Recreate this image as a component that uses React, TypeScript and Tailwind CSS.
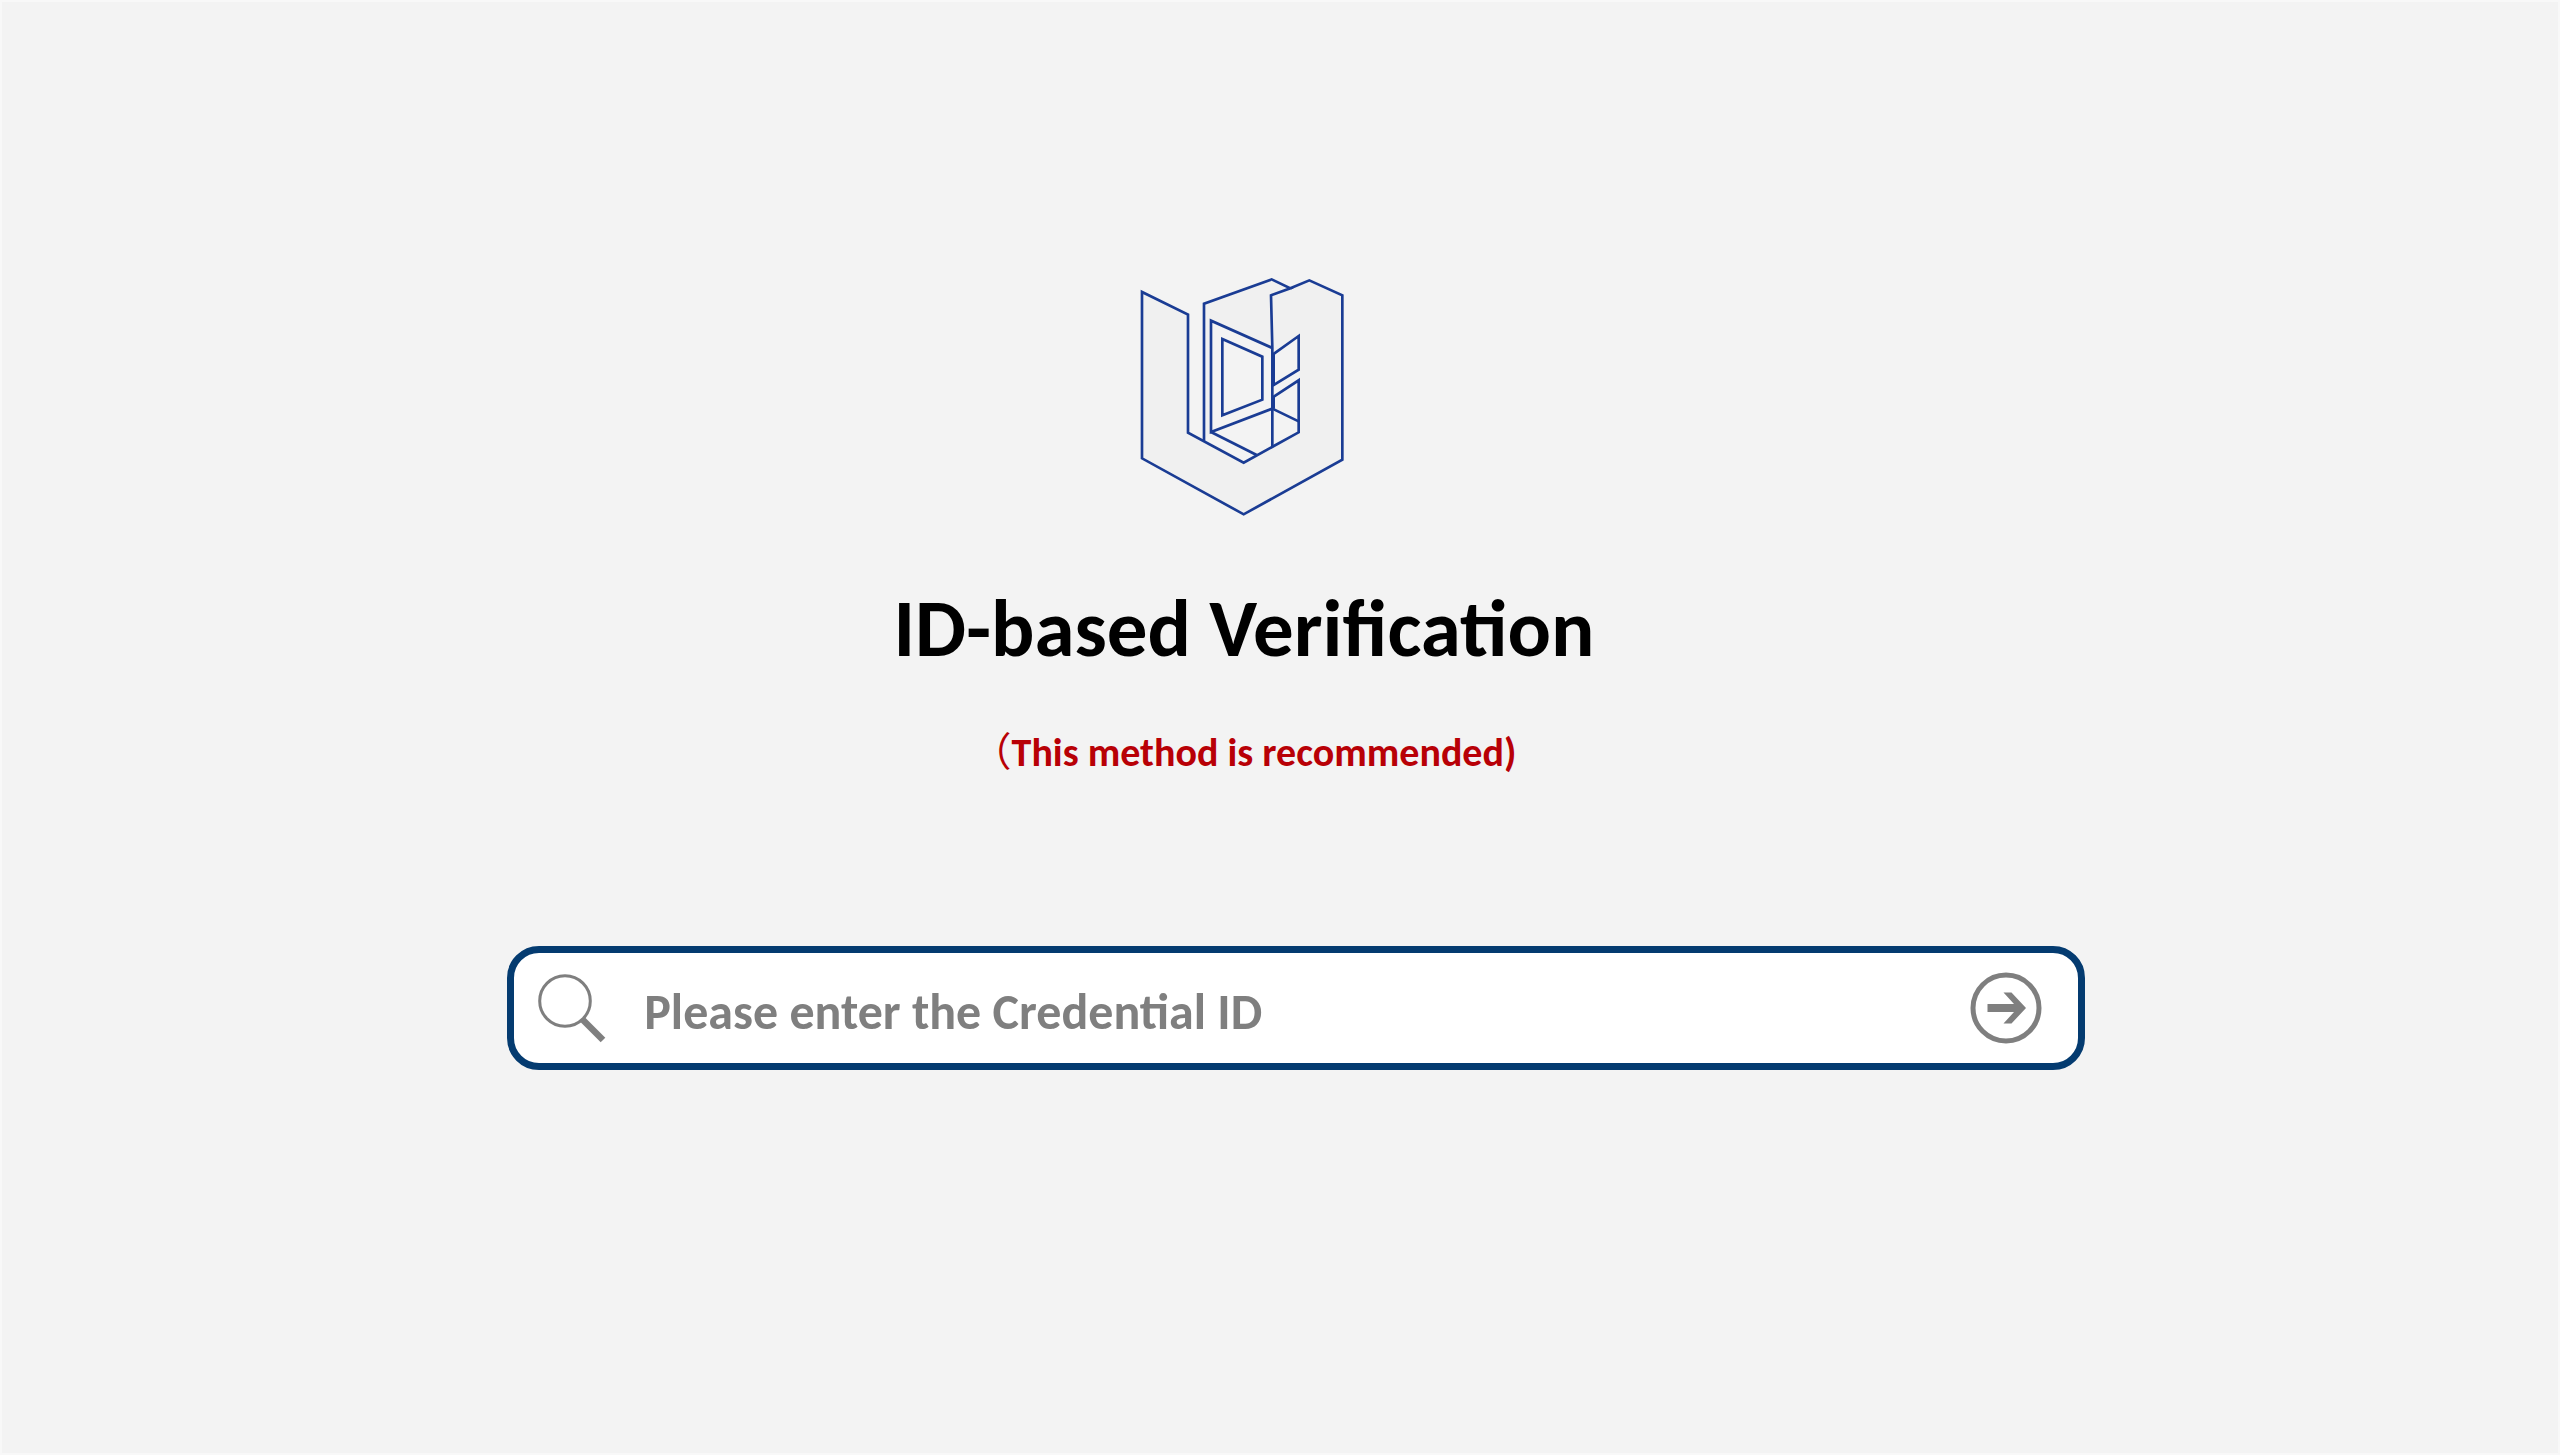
import { FormEvent, useState } from 'react';

function Logo() {
  return (
    <svg
      viewBox="60 50 624 720"
      className="w-[208px] h-[240px]"
      fill="none"
      stroke="#1a3c94"
      strokeWidth="8"
      aria-hidden="true"
    >
      <path
        d="M66 95 L204 163 V517 L371 607 L536 516 V226 L460 280 L453 105 L568 60 L667 105 V598 L371 762 L66 594 Z"
        fill="#f0f0f0"
        stroke="none"
      />
      <path d="M252 130 L455 57 L511 84 L453 105 V262 L273 181 V515 L252 540 Z" fill="#f0f0f0" stroke="none" />
      <path d="M511 84 L568 60 L667 105 V598 L371 762 L66 594 V95 L204 163 V517 L371 607 L536 516 V360 L458 411" />
      <path d="M252 541 V130 L455 57 L511 84 L453 105 L457 262 V560" />
      <path d="M455 262 L273 181 V515 L457 445 L536 483" />
      <path d="M273 515 L410 584" />
      <path d="M307 236 L427 289 V418 L307 465 Z" />
      <path d="M458 283 L536 227 V328 L458 376" />
      <path d="M461 281 V376 M461 409 V445" />
    </svg>
  );
}

function SearchIcon() {
  return (
    <svg viewBox="0 0 70 70" className="w-[70px] h-[70px]" fill="none" stroke="#7f7f7f" aria-hidden="true">
      <circle cx="27" cy="28" r="25.3" strokeWidth="3" />
      <path d="M44 46 L65 67" strokeWidth="6.5" />
    </svg>
  );
}

function ArrowIcon() {
  return (
    <svg viewBox="0 0 72 72" className="w-[72px] h-[72px]" aria-hidden="true">
      <circle cx="36" cy="36" r="33" fill="none" stroke="#7f7f7f" strokeWidth="5" />
      <path d="M17.5 32 H44 L33.5 20.5 H41.5 L56 36 L41.5 51.5 H33.5 L44 40 H17.5 Z" fill="#7f7f7f" />
    </svg>
  );
}

export default function App() {
  const [credentialId, setCredentialId] = useState('');

  const handleSubmit = (e: FormEvent) => {
    e.preventDefault();
  };

  return (
    <main className="min-h-screen bg-[#f3f3f3] border-2 border-[#f8f8f8] pt-[275px] pb-20 font-['Carlito','Lato','Noto_Sans_CJK_SC',sans-serif] font-bold">
      <header className="flex flex-col items-center pr-[72px] text-center">
        <Logo />
        <h1 className="mt-16 text-[81px] leading-[96px] text-black">ID-based Verification</h1>
        <p className="mt-11 text-[40px] leading-[56px] text-[#b80006]">
          <span className="font-['Noto_Sans_CJK_SC',sans-serif] font-normal">（</span>This method is recommended)
        </p>
      </header>

      <form onSubmit={handleSubmit} className="mt-[165px] pl-8 flex justify-center">
        <div className="flex items-center w-[62.5%] h-[124px] pl-6 pr-9 bg-white border-[7px] border-[#043b70] rounded-[32px]">
          <label htmlFor="credential-id" className="shrink-0">
            <SearchIcon />
          </label>
          <input
            id="credential-id"
            type="text"
            aria-label="Credential ID"
            value={credentialId}
            onChange={(e) => setCredentialId(e.target.value)}
            placeholder="Please enter the Credential ID"
            className="flex-1 min-w-0 ml-9 pt-2 text-[50px] leading-[60px] text-gray-700 placeholder:text-[#7f7f7f] outline-none"
          />
          <button type="submit" aria-label="Verify" className="cursor-pointer">
            <ArrowIcon />
          </button>
        </div>
      </form>
    </main>
  );
}
